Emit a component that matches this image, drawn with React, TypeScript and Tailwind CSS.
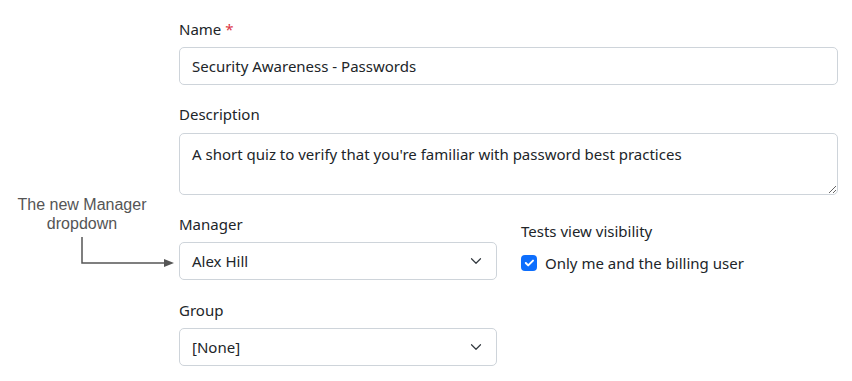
import { useState } from "react";

const font = { fontFamily: '"Noto Sans", "Open Sans", sans-serif' };

function Chevron() {
  return (
    <svg viewBox="0 0 16 16" className="pointer-events-none absolute right-3 top-1/2 h-3 w-4 -translate-y-1/2" fill="none">
      <path d="m2 5 6 6 6-6" stroke="#343a40" strokeWidth="1.6" strokeLinecap="round" strokeLinejoin="round" />
    </svg>
  );
}

function SelectBox({ value }: { value: string }) {
  return (
    <div className="relative flex h-[38px] items-center rounded-[5px] border border-[#ced4da] bg-white pl-3 pr-9 text-[15px] text-[#212529]">
      {value}
      <Chevron />
    </div>
  );
}

export default function App() {
  const [name, setName] = useState("Security Awareness - Passwords");
  const [desc, setDesc] = useState(
    "A short quiz to verify that you're familiar with password best practices"
  );
  const [onlyMe, setOnlyMe] = useState(true);

  return (
    <div className="relative h-[381px] w-[852px] bg-white" style={font}>
      {/* callout */}
      <div
        className="absolute left-0 top-[195px] w-[164px] text-center text-[16px] leading-[19px] text-[#555]"
        style={{ fontFamily: '"Liberation Sans", Arial, sans-serif' }}
      >
        The new Manager
        <br />
        dropdown
      </div>
      <svg className="absolute left-[78px] top-[236px]" width="100" height="34" viewBox="0 0 100 34">
        <path d="M4 1 V27 H88" stroke="#555" strokeWidth="1.5" fill="none" />
        <path d="M86 23 L96 27 L86 31 Z" fill="#555" />
      </svg>

      <div className="ml-[179px] w-[659px] pt-[17px] text-[15px] text-[#212529]">
        <div className="mb-[17px]">
          <label className="mb-[6px] block leading-6">
            Name <span className="text-[#dc3545]">*</span>
          </label>
          <input
            value={name}
            onChange={(e) => setName(e.target.value)}
            className="block h-[38px] w-full rounded-[5px] border border-[#ced4da] px-3 text-[15px] text-[#212529] outline-none"
          />
        </div>

        <div className="mb-[17px]">
          <label className="mb-[7px] block leading-6">Description</label>
          <textarea
            value={desc}
            onChange={(e) => setDesc(e.target.value)}
            rows={2}
            className="block h-[62px] w-full resize-y rounded-[5px] border border-[#ced4da] px-3 pb-[4px] pt-[8px] text-[15px] leading-6 text-[#212529] outline-none"
          />
        </div>

        <div className="flex gap-6">
          <div className="w-[318px]">
            <div className="mb-[18px]">
              <label className="mb-[6px] block leading-6">Manager</label>
              <SelectBox value="Alex Hill" />
            </div>
            <div>
              <label className="mb-[6px] block leading-6">Group</label>
              <SelectBox value="[None]" />
            </div>
          </div>

          <div className="flex-1 pt-[7px]">
            <div className="mb-[8px] leading-6">Tests view visibility</div>
            <label className="flex items-center gap-2 leading-6">
              <button
                type="button"
                onClick={() => setOnlyMe(!onlyMe)}
                className={
                  onlyMe
                    ? "flex h-4 w-4 items-center justify-center rounded-[4px] bg-[#0d6efd]"
                    : "flex h-4 w-4 items-center justify-center rounded-[4px] border border-[#ced4da] bg-white"
                }
              >
                {onlyMe && (
                  <svg viewBox="0 0 20 20" className="h-4 w-4" fill="none">
                    <path d="m6 10 3 3 6-6" stroke="#fff" strokeWidth="2.5" strokeLinecap="round" strokeLinejoin="round" />
                  </svg>
                )}
              </button>
              Only me and the billing user
            </label>
          </div>
        </div>
      </div>
    </div>
  );
}
